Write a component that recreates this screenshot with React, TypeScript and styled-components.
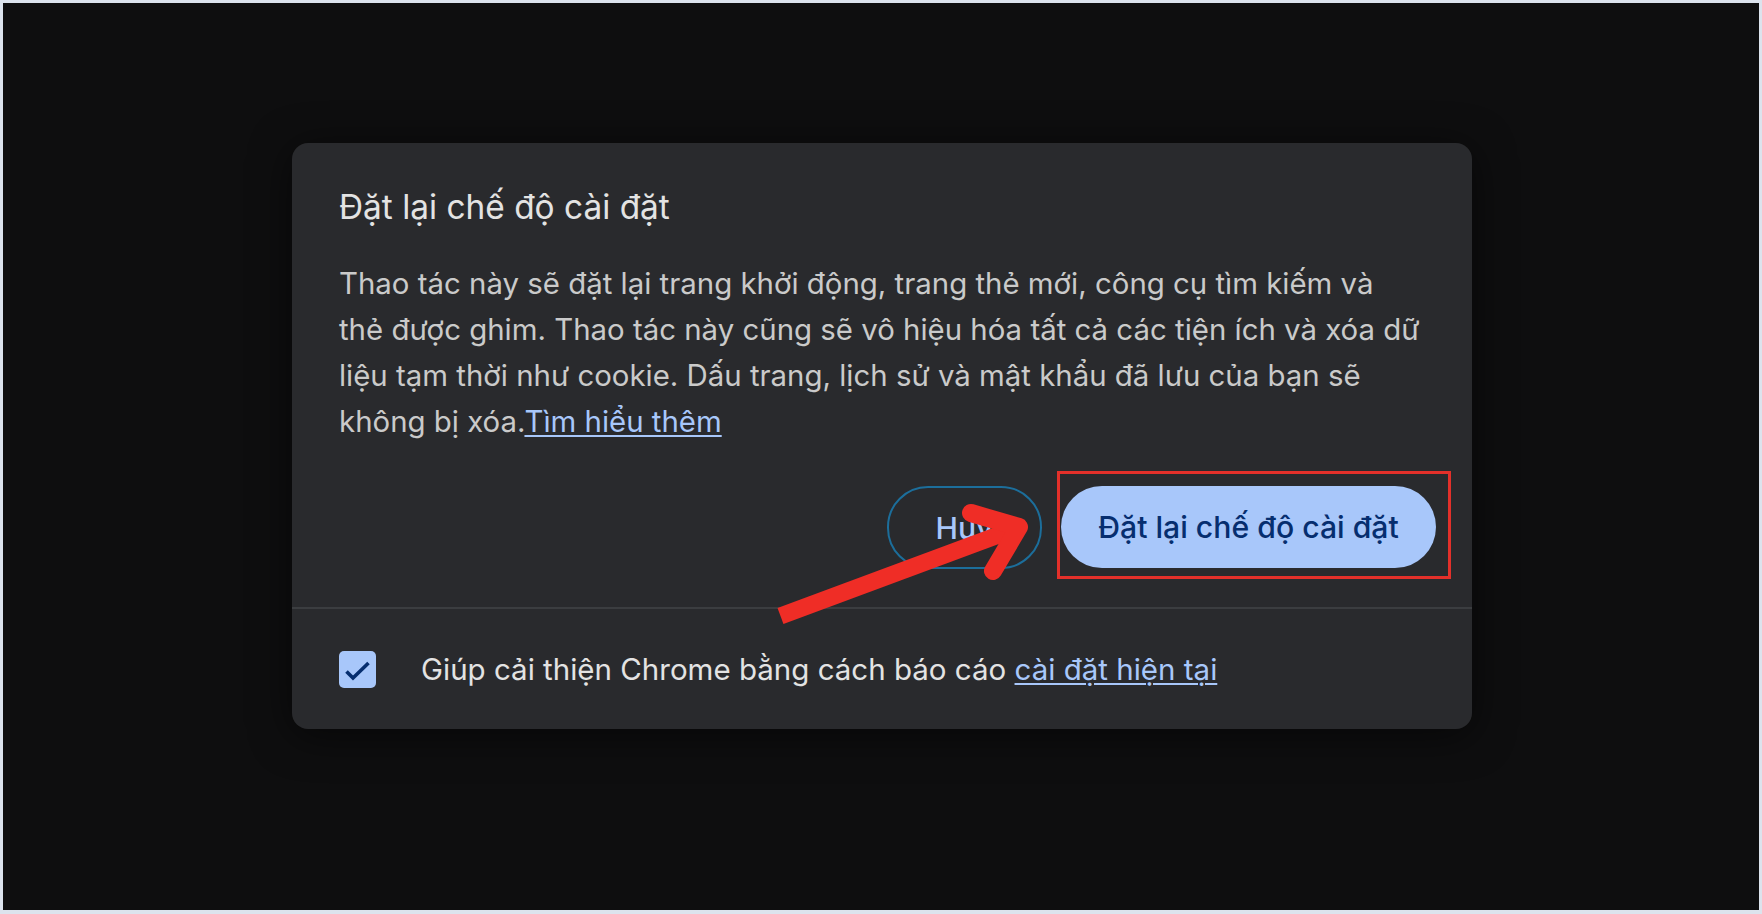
import React from "react";
import styled, { createGlobalStyle } from "styled-components";

const GlobalStyle = createGlobalStyle`
  html, body { margin: 0; padding: 0; }
  body {
    background: #dce3ed;
    font-family: "Inter", "Noto Sans", sans-serif;
    -webkit-font-smoothing: antialiased;
  }
`;

const Frame = styled.div`
  width: 1762px;
  height: 914px;
  box-sizing: border-box;
  padding: 3px 3px 4px 3px;
  display: flex;
`;

const Backdrop = styled.div`
  flex: 1;
  background: #0e0e0f;
  display: flex;
  justify-content: center;
  align-items: flex-start;
  padding-top: 140px;
`;

const Dialog = styled.div`
  position: relative;
  width: 1180px;
  margin-left: 2px;
  background: #292a2d;
  border-radius: 16px;
  box-shadow: 0 6px 40px rgba(0, 0, 0, 0.55);
  display: flex;
  flex-direction: column;
`;

const Body = styled.div`
  padding: 44px 36px 38px 47px;
  display: flex;
  flex-direction: column;
`;

const Title = styled.h2`
  margin: 0;
  font-size: 33.4px;
  line-height: 40px;
  font-weight: 400;
  color: #e3e3e3;
`;

const Description = styled.p`
  margin: 34px 0 0 0;
  font-size: 29.4px;
  line-height: 46px;
  color: #cacaca;
  white-space: nowrap;
`;

const Link = styled.a`
  color: #a8c7fa;
  text-decoration: underline;
  text-underline-offset: 3px;
  text-decoration-thickness: 2px;
`;

const Actions = styled.div`
  margin-top: 41px;
  display: flex;
  justify-content: flex-end;
  gap: 19px;
`;

const Button = styled.button<{ $primary?: boolean }>`
  height: 82px;
  box-sizing: border-box;
  border-radius: 41px;
  font-family: inherit;
  font-size: 30.2px;
  font-weight: 500;
  cursor: pointer;
  display: flex;
  align-items: center;
  justify-content: center;
  ${(p) =>
    p.$primary
      ? `
    width: 375px;
    background: #a8c7fa;
    color: #062e6f;
    border: none;
  `
      : `
    width: 155px;
    height: 83px;
    background: transparent;
    color: #a8c7fa;
    border: 2px solid #1c6e9b;
  `}
`;

const Highlight = styled.div`
  position: relative;
  display: flex;
`;

const RedBox = styled.div`
  position: absolute;
  top: -15px;
  left: -4px;
  right: -15px;
  bottom: -10px;
  border: 3px solid #e3302a;
  pointer-events: none;
`;

const Divider = styled.div`
  height: 2px;
  background: #3b3d40;
`;

const Footer = styled.label`
  height: 120px;
  padding: 0 47px;
  display: flex;
  align-items: center;
  gap: 45px;
  font-size: 29.5px;
  color: #e3e3e3;
`;

const CheckBox = styled.span`
  width: 37px;
  height: 37px;
  border-radius: 5px;
  background: #a8c7fa;
  display: flex;
  flex-shrink: 0;
`;

const ArrowSvg = styled.svg`
  position: absolute;
  left: 480px;
  top: 360px;
  width: 260px;
  height: 125px;
  pointer-events: none;
  overflow: visible;
`;

export default function App() {
  return (
    <>
      <GlobalStyle />
      <Frame>
        <Backdrop>
          <Dialog>
            <Body>
              <Title>Đặt lại chế độ cài đặt</Title>
              <Description>
                Thao tác này sẽ đặt lại trang khởi động, trang thẻ mới, công cụ tìm kiếm và
                <br />
                thẻ được ghim. Thao tác này cũng sẽ vô hiệu hóa tất cả các tiện ích và xóa dữ
                <br />
                liệu tạm thời như cookie. Dấu trang, lịch sử và mật khẩu đã lưu của bạn sẽ
                <br />
                không bị xóa.<Link href="#">Tìm hiểu thêm</Link>
              </Description>
              <Actions>
                <Button>Hủy</Button>
                <Highlight>
                  <Button $primary>Đặt lại chế độ cài đặt</Button>
                  <RedBox />
                </Highlight>
              </Actions>
            </Body>
            <Divider />
            <Footer>
              <CheckBox>
                <svg width="37" height="37" viewBox="0 0 37 37">
                  <path
                    d="M7.5 20.5 L14 27 L29.5 12"
                    fill="none"
                    stroke="#062e6f"
                    strokeWidth="3.6"
                  />
                </svg>
              </CheckBox>
              <span>
                Giúp cải thiện Chrome bằng cách báo cáo{" "}
                <Link href="#">cài đặt hiện tại</Link>
              </span>
            </Footer>
            <ArrowSvg viewBox="0 0 260 125">
              <line
                x1="8.5"
                y1="113"
                x2="240"
                y2="27"
                stroke="#ef2d26"
                strokeWidth="17"
                strokeLinecap="butt"
              />
              <polyline
                points="199,10 247,24 221,68"
                fill="none"
                stroke="#ef2d26"
                strokeWidth="18"
                strokeLinecap="round"
                strokeLinejoin="round"
              />
            </ArrowSvg>
          </Dialog>
        </Backdrop>
      </Frame>
    </>
  );
}
